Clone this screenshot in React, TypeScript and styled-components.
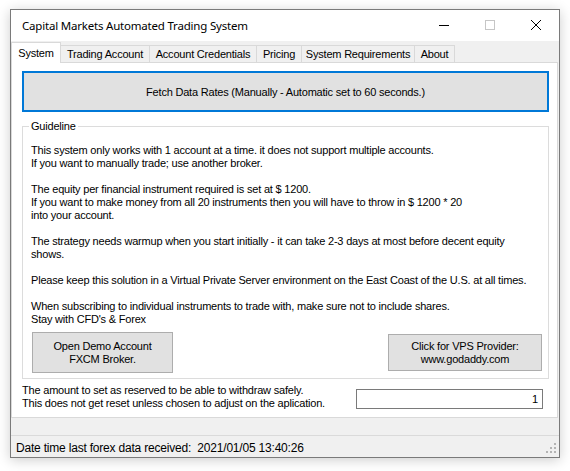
import React from "react";
import styled, { createGlobalStyle } from "styled-components";

const GlobalStyle = createGlobalStyle`
  *, *::before, *::after { box-sizing: border-box; }
  html, body { margin: 0; padding: 0; background: #ffffff; }
  body {
    width: 570px;
    height: 471px;
    overflow: hidden;
    font-family: "Liberation Sans", Arial, sans-serif;
    font-size: 11px;
    letter-spacing: -0.2px;
    color: #000;
  }
`;

const Window = styled.div`
  margin: 9px 0 0 10px;
  width: 550px;
  height: 449px;
  border: 1px solid #7a7a7a;
  background: #f0f0f0;
  box-shadow: 0 2px 12px rgba(0, 0, 0, 0.2);
  display: flex;
  flex-direction: column;
`;

const TitleBar = styled.div`
  height: 31px;
  flex: none;
  background: #ffffff;
  display: flex;
  align-items: flex-start;
`;

const Caption = styled.div`
  flex: 1;
  height: 30px;
  padding-left: 11px;
  display: flex;
  align-items: center;
  font-family: "Noto Sans", "Open Sans", sans-serif;
  font-size: 11.5px;
  letter-spacing: -0.2px;
`;

const CaptionButton = styled.div<{ $disabled?: boolean }>`
  width: 46px;
  height: 30px;
  display: flex;
  align-items: center;
  justify-content: center;
  color: ${(p) => (p.$disabled ? "#c6c6c6" : "#000")};
`;

const Client = styled.div`
  flex: 1;
  display: flex;
  flex-direction: column;
  padding-top: 1px;
`;

const TabStrip = styled.div`
  height: 20px;
  display: flex;
  align-items: flex-end;
`;

const Tab = styled.div<{ $active?: boolean; $w: number }>`
  position: relative;
  width: ${(p) => p.$w}px;
  height: ${(p) => (p.$active ? 21 : 17)}px;
  margin-bottom: ${(p) => (p.$active ? -1 : 0)}px;
  background: ${(p) => (p.$active ? "#ffffff" : "#f0f0f0")};
  border: 1px solid #d9d9d9;
  border-bottom: none;
  border-left: ${(p) => (p.$active ? "1px solid #d9d9d9" : "none")};
  display: flex;
  align-items: center;
  justify-content: center;
  white-space: nowrap;
`;

const TabPage = styled.div`
  width: 547px;
  height: 356px;
  flex: none;
  background: #ffffff;
  border: 1px solid #d9d9d9;
  padding: 8px 0 0 10px;
  display: flex;
  flex-direction: column;
`;

const FetchButton = styled.div`
  width: 527px;
  height: 41px;
  border: 2px solid #0078d7;
  background: #e1e1e1;
  display: flex;
  align-items: center;
  justify-content: center;
`;

const Group = styled.fieldset`
  margin: 8px 0 0 0;
  width: 527px;
  border: 1px solid #dcdcdc;
  padding: 11px 6px 5px 8px;
  min-width: 0;
`;

const Legend = styled.legend`
  margin-left: -2px;
  padding: 0 2px;
  line-height: 13px;
`;

const GuideText = styled.div`
  line-height: 13px;
  white-space: pre-line;
`;

const ButtonRow = styled.div`
  margin-top: 6px;
  display: flex;
  justify-content: space-between;
  align-items: flex-start;
`;

const PushButton = styled.div<{ $w: number; $h: number; $top?: number }>`
  width: ${(p) => p.$w}px;
  height: ${(p) => p.$h}px;
  margin-top: ${(p) => p.$top ?? 0}px;
  margin-left: 1px;
  border: 1px solid #adadad;
  background: #e1e1e1;
  display: flex;
  flex-direction: column;
  align-items: center;
  justify-content: center;
  line-height: 13px;
  text-align: center;
`;

const AmountRow = styled.div`
  margin-top: 5px;
  width: 521px;
  display: flex;
  align-items: flex-start;
  justify-content: space-between;
`;

const AmountLabel = styled.div`
  line-height: 13px;
`;

const NumberBox = styled.div`
  margin-top: 5px;
  width: 187px;
  height: 20px;
  border: 1px solid #7a7a7a;
  background: #ffffff;
  padding-right: 4px;
  display: flex;
  align-items: center;
  justify-content: flex-end;
`;

const StatusStrip = styled.div`
  margin-top: auto;
  height: 22px;
  border-top: 1px solid #dadada;
  padding: 2px 0 0 5px;
  display: flex;
  align-items: center;
  justify-content: space-between;
  font-size: 12px;
  letter-spacing: -0.2px;
`;

const Grip = styled.svg`
  align-self: flex-end;
  margin: 0 2px 3px 0;
`;

const tabs = [
  { label: "System", w: 50, active: true },
  { label: "Trading Account", w: 89 },
  { label: "Account Credentials", w: 107 },
  { label: "Pricing", w: 45 },
  { label: "System Requirements", w: 113 },
  { label: "About", w: 40 },
];

const guideline = `This system only works with 1 account at a time. it does not support multiple accounts.
If you want to manually trade; use another broker.
\u00a0
The equity per financial instrument required is set at $ 1200.
If you want to make money from all 20 instruments then you will have to throw in $ 1200 * 20
into your account.
\u00a0
The strategy needs warmup when you start initially - it can take 2-3 days at most before decent equity
shows.
\u00a0
Please keep this solution in a Virtual Private Server environment on the East Coast of the U.S. at all times.
\u00a0
When subscribing to individual instruments to trade with, make sure not to include shares.
Stay with CFD's & Forex`;

export default function App() {
  return (
    <>
      <GlobalStyle />
      <Window>
        <TitleBar>
          <Caption>Capital Markets Automated Trading System</Caption>
          <CaptionButton>
            <svg width="10" height="10" viewBox="0 0 10 10">
              <line x1="0" y1="5.5" x2="10" y2="5.5" stroke="currentColor" strokeWidth="1" />
            </svg>
          </CaptionButton>
          <CaptionButton $disabled>
            <svg width="10" height="10" viewBox="0 0 10 10">
              <rect x="0.5" y="0.5" width="9" height="9" fill="none" stroke="currentColor" strokeWidth="1" />
            </svg>
          </CaptionButton>
          <CaptionButton>
            <svg width="10" height="10" viewBox="0 0 10 10">
              <path d="M0 0 L10 10 M10 0 L0 10" stroke="currentColor" strokeWidth="1" />
            </svg>
          </CaptionButton>
        </TitleBar>
        <Client>
          <TabStrip>
            {tabs.map((t) => (
              <Tab key={t.label} $w={t.w} $active={t.active}>
                {t.label}
              </Tab>
            ))}
          </TabStrip>
          <TabPage>
            <FetchButton>Fetch Data Rates (Manually - Automatic set to 60 seconds.)</FetchButton>
            <Group>
              <Legend>Guideline</Legend>
              <GuideText>{guideline}</GuideText>
              <ButtonRow>
                <PushButton $w={141} $h={41}>
                  <span>Open Demo Account</span>
                  <span>FXCM Broker.</span>
                </PushButton>
                <PushButton $w={154} $h={37} $top={2}>
                  <span>Click for VPS Provider:</span>
                  <span>www.godaddy.com</span>
                </PushButton>
              </ButtonRow>
            </Group>
            <AmountRow>
              <AmountLabel>
                The amount to set as reserved to be able to withdraw safely.
                <br />
                This does not get reset unless chosen to adjust on the aplication.
              </AmountLabel>
              <NumberBox>1</NumberBox>
            </AmountRow>
          </TabPage>
          <StatusStrip>
            <span>Date time last forex data received:&nbsp; 2021/01/05 13:40:26</span>
            <Grip width="11" height="11" viewBox="0 0 11 11" fill="#b4b4b4">
              <rect x="8" y="0" width="2" height="2" />
              <rect x="4" y="4" width="2" height="2" />
              <rect x="8" y="4" width="2" height="2" />
              <rect x="0" y="8" width="2" height="2" />
              <rect x="4" y="8" width="2" height="2" />
              <rect x="8" y="8" width="2" height="2" />
            </Grip>
          </StatusStrip>
        </Client>
      </Window>
    </>
  );
}
